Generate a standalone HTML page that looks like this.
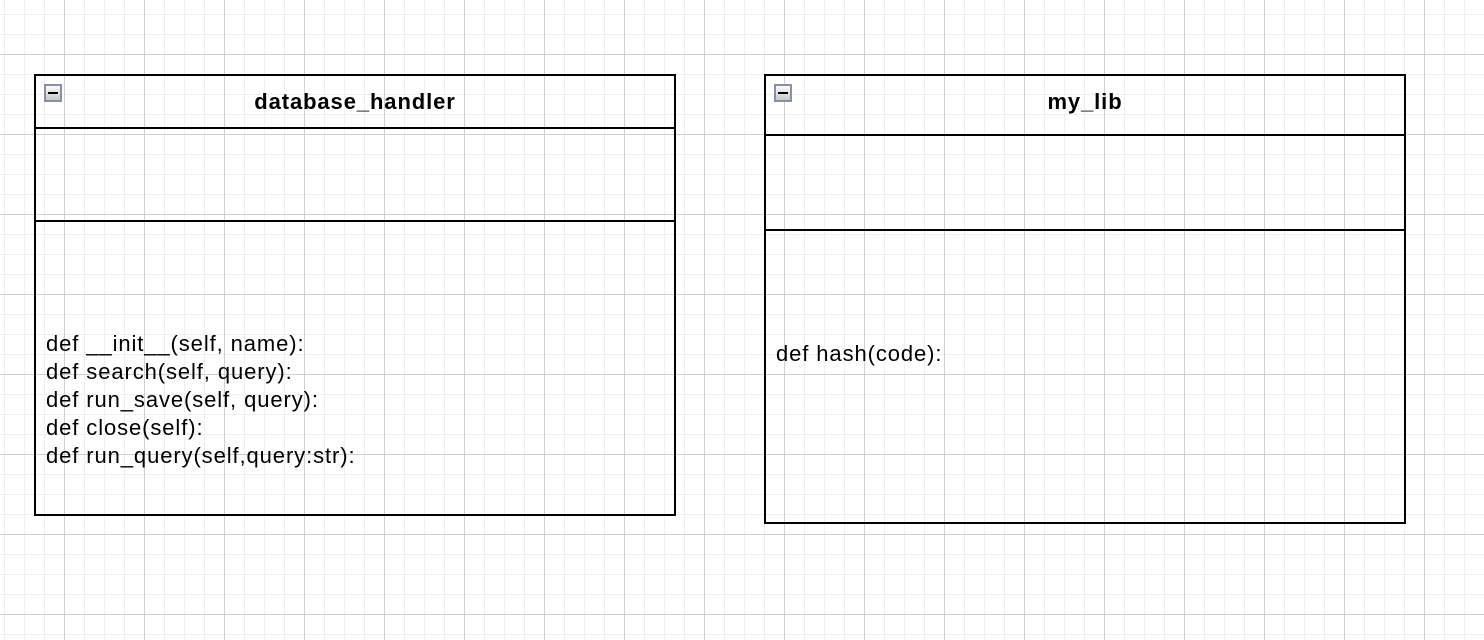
<!DOCTYPE html>
<html><head><meta charset="utf-8"><style>
html,body{margin:0;padding:0}
body{width:1484px;height:640px;overflow:hidden;position:relative;background-color:#fff;
background-image:
linear-gradient(to right,#d0d0d0 1px,transparent 1px),
linear-gradient(to bottom,#d0d0d0 1px,transparent 1px),
linear-gradient(to right,#efefef 1px,transparent 1px),
linear-gradient(to bottom,#efefef 1px,transparent 1px);
background-size:80px 80px,80px 80px,20px 20px,20px 20px;
background-position:64px 54px,64px 54px,4px 14px,4px 14px;
font-family:"Liberation Sans",Arial,sans-serif;color:#000}
.box{position:absolute;border:2px solid #000;box-sizing:border-box}
.ln{position:absolute;left:0;right:0;height:2px;background:#000}
.title{position:absolute;left:0;right:0;text-align:center;font-weight:bold;font-size:22px;letter-spacing:0.9px}
.icon{position:absolute;left:8px;top:8px;width:14px;height:14px;border:2px solid #8a90a0;background:linear-gradient(#fafafa,#c8c8c8)}
.icon:after{content:"";position:absolute;left:2px;right:2px;top:6px;height:2px;background:#000}
.m{position:absolute;left:10px;font-size:22px;letter-spacing:0.9px;line-height:28px;white-space:pre}
</style></head><body>
<div class="box" style="left:34px;top:74px;width:642px;height:442px">
<div class="icon"></div>
<div class="title" style="top:13px">database_handler</div>
<div class="ln" style="top:51px"></div>
<div class="ln" style="top:144px"></div>
<div class="m" style="top:254px">def __init__(self, name):
def search(self, query):
def run_save(self, query):
def close(self):
def run_query(self,query:str):</div>
</div>
<div class="box" style="left:764px;top:74px;width:642px;height:450px">
<div class="icon"></div>
<div class="title" style="top:13px">my_lib</div>
<div class="ln" style="top:58px"></div>
<div class="ln" style="top:153px"></div>
<div class="m" style="top:264px">def hash(code):</div>
</div>
</body></html>
